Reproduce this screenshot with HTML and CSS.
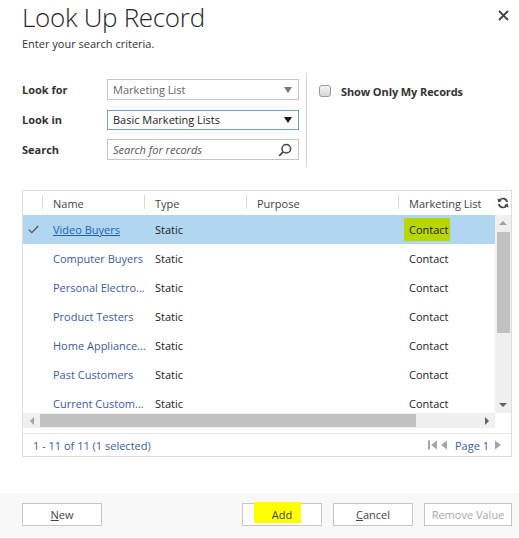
FILE: index.html
```html
<!DOCTYPE html>
<html lang="en">
<head>
  <meta charset="UTF-8">
  <title>Look Up Record</title>
  <link rel="stylesheet" href="styles.css">
</head>
<body>
  <div class="dialog">
    <div class="dlg-head">
      <div>
        <h1 class="dlg-title">Look Up Record</h1>
        <p class="dlg-sub">Enter your search criteria.</p>
      </div>
      <span class="dlg-close">
        <svg width="11" height="11" viewBox="0 0 11 11"><path d="M1 1 L10 10 M10 1 L1 10" stroke="#444" stroke-width="1.8"/></svg>
      </span>
    </div>

    <div class="criteria">
      <div class="fields">
        <label class="f-label">Look for</label>
        <div class="box disabled">
          <span>Marketing List</span>
          <svg width="8" height="6" viewBox="0 0 8 6"><path d="M0 0 H8 L4 6 Z" fill="#777"/></svg>
        </div>
        <label class="f-label">Look in</label>
        <div class="box focused">
          <span>Basic Marketing Lists</span>
          <svg width="8" height="6" viewBox="0 0 8 6"><path d="M0 0 H8 L4 6 Z" fill="#111"/></svg>
        </div>
        <label class="f-label">Search</label>
        <div class="box">
          <span class="placeholder">Search for records</span>
          <svg width="14" height="14" viewBox="0 0 14 14"><circle cx="8.3" cy="5.7" r="4.3" fill="none" stroke="#444" stroke-width="1.5"/><path d="M5.2 8.8 L1.2 12.8" stroke="#444" stroke-width="1.8"/></svg>
        </div>
      </div>
      <div class="divider"></div>
      <div class="mine">
        <span class="chk"></span>
        <span>Show Only My Records</span>
      </div>
    </div>

    <div class="grid">
      <div class="grid-head">
        <div class="col c-chk"></div>
        <div class="col c-name sep">Name</div>
        <div class="col c-type sep">Type</div>
        <div class="col c-purpose sep">Purpose</div>
        <div class="col c-ml sep">Marketing List</div>
        <div class="col c-refresh">
          <svg width="12" height="12" viewBox="0 0 12 12">
            <path d="M10.2 5 A4.3 4.3 0 0 0 2.3 3.6" fill="none" stroke="#444" stroke-width="1.7"/>
            <path d="M0.6 1.2 L1.2 5.4 L4.9 4 Z" fill="#444"/>
            <path d="M1.8 7 A4.3 4.3 0 0 0 9.7 8.4" fill="none" stroke="#444" stroke-width="1.7"/>
            <path d="M11.4 10.8 L10.8 6.6 L7.1 8 Z" fill="#444"/>
          </svg>
        </div>
      </div>
      <div class="grid-body">
        <div class="rows">
          <div class="row selected">
            <div class="col c-chk">
              <svg width="11" height="9" viewBox="0 0 11 9"><path d="M0.8 4.6 L3.8 7.6 L10.2 1" fill="none" stroke="#555" stroke-width="1.3"/></svg>
            </div>
            <div class="col c-name"><a class="link current">Video Buyers</a></div>
            <div class="col c-type">Static</div>
            <div class="col c-purpose"></div>
            <div class="col c-ml"><span class="mark-green">Contact</span></div>
          </div>
          <div class="row">
            <div class="col c-chk"></div>
            <div class="col c-name"><a class="link">Computer Buyers</a></div>
            <div class="col c-type">Static</div>
            <div class="col c-purpose"></div>
            <div class="col c-ml">Contact</div>
          </div>
          <div class="row">
            <div class="col c-chk"></div>
            <div class="col c-name"><a class="link">Personal Electro...</a></div>
            <div class="col c-type">Static</div>
            <div class="col c-purpose"></div>
            <div class="col c-ml">Contact</div>
          </div>
          <div class="row">
            <div class="col c-chk"></div>
            <div class="col c-name"><a class="link">Product Testers</a></div>
            <div class="col c-type">Static</div>
            <div class="col c-purpose"></div>
            <div class="col c-ml">Contact</div>
          </div>
          <div class="row">
            <div class="col c-chk"></div>
            <div class="col c-name"><a class="link">Home Appliance...</a></div>
            <div class="col c-type">Static</div>
            <div class="col c-purpose"></div>
            <div class="col c-ml">Contact</div>
          </div>
          <div class="row">
            <div class="col c-chk"></div>
            <div class="col c-name"><a class="link">Past Customers</a></div>
            <div class="col c-type">Static</div>
            <div class="col c-purpose"></div>
            <div class="col c-ml">Contact</div>
          </div>
          <div class="row">
            <div class="col c-chk"></div>
            <div class="col c-name"><a class="link">Current Custom...</a></div>
            <div class="col c-type">Static</div>
            <div class="col c-purpose"></div>
            <div class="col c-ml">Contact</div>
          </div>
        </div>
        <div class="vscroll">
          <span class="arrow"><svg width="8" height="4" viewBox="0 0 8 4"><path d="M0 4 L4 0 L8 4 Z" fill="#a0a0a0"/></svg></span>
          <span class="v-thumb"></span>
          <span class="v-track"></span>
          <span class="arrow"><svg width="8" height="4" viewBox="0 0 8 4"><path d="M0 0 L4 4 L8 0 Z" fill="#606060"/></svg></span>
        </div>
      </div>
      <div class="hscroll">
        <div class="h-bar">
          <span class="arrow"><svg width="4" height="8" viewBox="0 0 4 8"><path d="M4 0 L0 4 L4 8 Z" fill="#a0a0a0"/></svg></span>
          <span class="h-thumb"></span>
          <span class="arrow"><svg width="4" height="8" viewBox="0 0 4 8"><path d="M0 0 L4 4 L0 8 Z" fill="#606060"/></svg></span>
        </div>
        <div class="corner"></div>
      </div>
      <div class="grid-foot">
        <span class="count">1 - 11 of 11 (1 selected)</span>
        <span class="pager">
          <svg width="9" height="10" viewBox="0 0 9 10"><rect x="0" y="0.5" width="2" height="9" fill="#a6a6a6"/><path d="M9 0.5 V9.5 L3 5 Z" fill="#a6a6a6"/></svg>
          <svg width="6" height="10" viewBox="0 0 6 10"><path d="M6 0.5 V9.5 L0 5 Z" fill="#a6a6a6"/></svg>
          <span class="page">Page 1</span>
          <svg width="6" height="10" viewBox="0 0 6 10"><path d="M0 0.5 V9.5 L6 5 Z" fill="#a6a6a6"/></svg>
        </span>
      </div>
    </div>
  </div>

  <div class="actions">
    <button class="btn"><u>N</u>ew</button>
    <div class="btn-group">
      <button class="btn btn-add"><span class="mark-yellow"></span><span class="btn-text">Add</span></button>
      <button class="btn"><u>C</u>ancel</button>
      <button class="btn btn-wide" disabled>Remove Value</button>
    </div>
  </div>
</body>
</html>
```

FILE: styles.css
```css
body {
  margin: 0;
  font-family: "Open Sans", "Noto Sans", sans-serif;
  font-size: 11px;
  color: #222;
  background: #fff;
}
.dialog {
  padding: 0 7px 0 22px;
}
.dlg-head {
  display: flex;
  justify-content: space-between;
  align-items: flex-start;
}
.dlg-title {
  margin: 0;
  font-size: 26px;
  font-weight: 300;
  line-height: 34px;
  color: #262626;
  letter-spacing: -0.3px;
}
.dlg-sub {
  margin: 2px 0 0;
  font-size: 11px;
  line-height: 16px;
  color: #333;
}
.dlg-close {
  margin: 10px 3px 0 0;
  display: flex;
}
.criteria {
  display: flex;
  margin-top: 21px;
  height: 94px;
}
.fields {
  display: grid;
  grid-template-columns: 85px 192px;
  grid-auto-rows: 21px;
  row-gap: 9px;
  padding-top: 6px;
  align-items: center;
}
.f-label {
  font-weight: bold;
  color: #333;
}
.box {
  height: 21px;
  box-sizing: border-box;
  border: 1px solid #c6c6c6;
  display: flex;
  align-items: center;
  justify-content: space-between;
  padding: 0 6px 0 5px;
  color: #222;
}
.box.disabled {
  color: #666;
}
.box.focused {
  border-color: #6f9fd8;
  height: 20px;
}
.placeholder {
  font-style: italic;
  color: #555;
}
.divider {
  width: 1px;
  background: #d0d0d0;
  margin-left: 7px;
}
.mine {
  display: flex;
  align-items: center;
  gap: 10px;
  margin-left: 12px;
  height: 14px;
  margin-top: 11px;
  font-weight: bold;
  color: #333;
  letter-spacing: -0.1px;
}
.chk {
  width: 10px;
  height: 10px;
  border: 1px solid #9a9a9a;
  border-radius: 3px;
  background: linear-gradient(#f4f4f4, #d8d8d8);
}
.grid {
  margin-top: 23px;
  border: 1px solid #dedede;
}
.grid-head, .row {
  display: flex;
  align-items: center;
}
.grid-head {
  height: 24px;
  color: #444;
}
.col {
  box-sizing: border-box;
  padding-left: 11px;
  white-space: nowrap;
  position: relative;
  display: flex;
  align-items: center;
  height: 100%;
}
.sep::before {
  content: "";
  position: absolute;
  left: 0;
  top: 4px;
  height: 14px;
  border-left: 1px solid #d8d8d8;
}
.c-chk { width: 19px; padding-left: 5px; }
.c-name { width: 102px; }
.c-type { width: 102px; }
.c-purpose { width: 152px; }
.c-ml { width: 97px; }
.c-refresh { flex: 1; padding-left: 2px; }
.grid-body {
  display: flex;
  height: 198px;
}
.rows {
  width: 472px;
  overflow: hidden;
}
.row {
  height: 29px;
}
.row.selected {
  background: #b1d6f0;
}
.link {
  color: #3c5aa6;
}
.link.current {
  color: #1d5fb5;
  text-decoration: underline;
}
.mark-green {
  background: #b8d600;
  margin-left: -5px;
  padding: 4px 1px 4px 5px;
}
.vscroll {
  flex: 1;
  background: #f0f0f0;
  display: flex;
  flex-direction: column;
  align-items: center;
}
.vscroll .arrow {
  height: 16px;
  display: flex;
  align-items: center;
}
.v-thumb {
  width: 13px;
  height: 101px;
  background: #c1c1c1;
  margin-top: 1px;
}
.v-track {
  flex: 1;
}
.hscroll {
  display: flex;
  height: 15px;
}
.h-bar {
  width: 472px;
  background: #f0f0f0;
  display: flex;
  align-items: center;
}
.h-bar .arrow {
  width: 17px;
  display: flex;
  justify-content: center;
}
.h-thumb {
  flex: 1;
  height: 13px;
  background: #c1c1c1;
  margin-right: 62px;
}
.corner {
  flex: 1;
}
.grid-foot {
  margin-top: 5px;
  border-top: 1px solid #e4e4e4;
  height: 22px;
  display: flex;
  align-items: center;
  justify-content: space-between;
  padding: 0 10px 0 10px;
}
.count {
  color: #3c5aa6;
}
.pager {
  display: flex;
  align-items: center;
  gap: 4px;
}
.page {
  color: #3c5aa6;
  margin: 0 2px 0 4px;
}
.actions {
  margin-top: 36px;
  height: 44px;
  background: #f8f8f8;
  display: flex;
  align-items: flex-start;
  padding: 10px 7px 0 22px;
  box-sizing: border-box;
}
.btn-group {
  margin-left: auto;
  display: flex;
  gap: 11px;
}
.btn {
  width: 80px;
  height: 23px;
  border: 1px solid #c6c6c6;
  background: #fff;
  font-family: "Open Sans", "Noto Sans", sans-serif;
  font-size: 11px;
  color: #444;
  padding: 0;
  position: relative;
}
.btn-wide {
  width: 88px;
}
.btn:disabled {
  color: #aaa;
}
.btn-text {
  position: relative;
}
.mark-yellow {
  position: absolute;
  left: 11px;
  top: -2px;
  width: 47px;
  height: 21px;
  background: #ffff00;
}
```
